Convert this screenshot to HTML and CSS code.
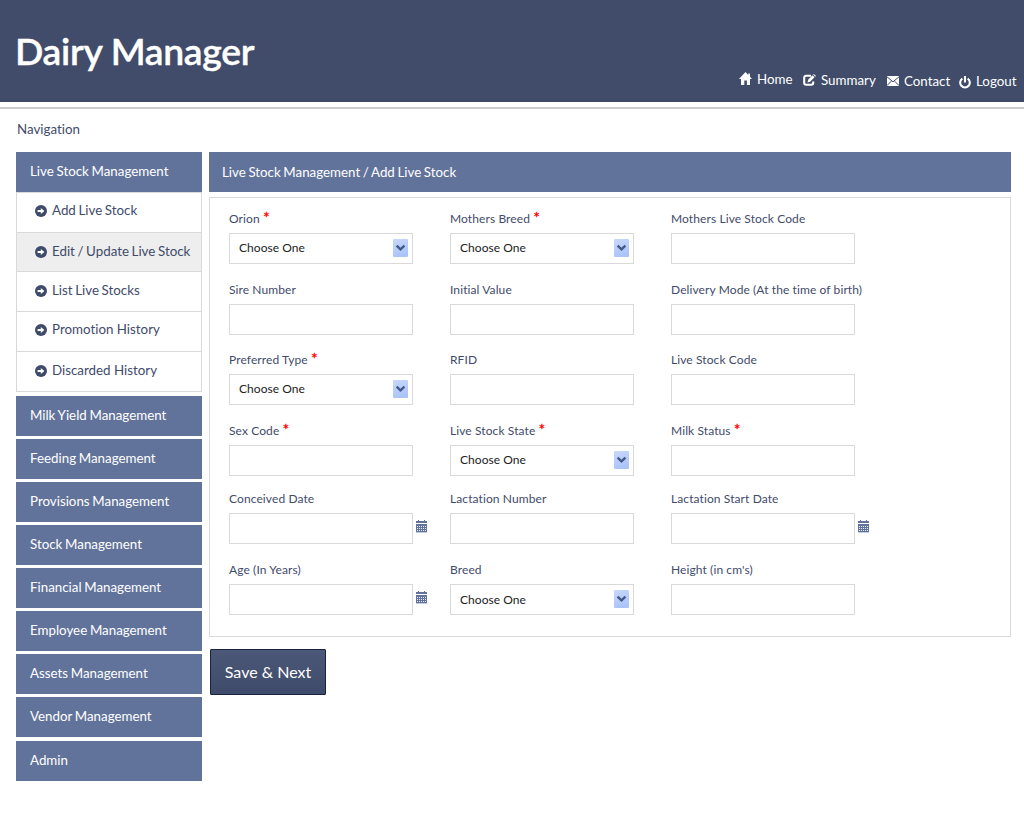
FILE: index.html
```
<!DOCTYPE html>
<html lang="en">
<head>
<meta charset="utf-8">
<title>Dairy Manager</title>
<link rel="stylesheet" href="styles.css">
</head>
<body>
<svg class="defs" width="0" height="0" aria-hidden="true">
<symbol id="arrow" viewBox="0 0 12 12"><circle cx="6" cy="6" r="6" fill="#3f4b6a"/><path d="M2.6 5.1h3.2V3L9.4 6 5.8 9V6.9H2.6z" fill="#fff"/></symbol>
<symbol id="cal" viewBox="0 0 11 13"><path d="M2 0h1v1h5V0h1v1h2v2H0V1h2zM0 4h11v8H0z" fill="#61729b"/><path d="M1 6.5h9M1 8.5h9M1 10.5h9" stroke="#fff" stroke-opacity=".85" stroke-dasharray="1 1"/><path d="M0 12h11v1H0z" fill="#c3cbe0"/></symbol>
<symbol id="chev" viewBox="0 0 15 18"><rect width="15" height="18" rx="1" fill="url(#g)"/><path d="M3.6 6.6 7.5 10.3l3.9-3.7" fill="none" stroke="#425885" stroke-width="2.3"/></symbol>
<linearGradient id="g" x2="0.3" y2="1"><stop stop-color="#c9d8fb"/><stop offset="1" stop-color="#abc4f8"/></linearGradient>
</svg>
<header class="top">
<h1>Dairy Manager</h1>
<nav>
<a class="home"><svg width="13" height="13" viewBox="0 0 13 13"><path d="M6.5 0 0 7h2v6h3.3V8.5h2.6V13H11V7h2l-2-2.2V1.5H9.3v1.6z" fill="#fff"/></svg><span>Home</span></a>
<a class="summary"><svg width="13" height="12" viewBox="0 0 13 12"><path d="M8 1.8H3.2Q1.2 1.8 1.2 3.8v5q0 2 2 2h5q2 0 2-2V7.5" fill="none" stroke="#fff" stroke-width="2.1"/><path d="m4.5 8.5.6-2.7L9.5 1.2l2 2-4.4 4.5zM10.1.6l.7-.6L13 2l-.8.7z" fill="#fff"/></svg><span>Summary</span></a>
<a class="contact"><svg width="12" height="10" viewBox="0 0 12 10"><path d="M0 0h12v10H0z" fill="#fff"/><path d="m0 .8 6 5 6-5M0 9.6l4.3-4.4M12 9.6 7.7 5.2" fill="none" stroke="#3f4b6a"/></svg><span>Contact</span></a>
<a class="logout"><svg width="12" height="13" viewBox="0 0 12 13"><path d="M3.4 2.6a4.8 4.8 0 1 0 5.2 0M6 0v6.5" fill="none" stroke="#fff" stroke-width="2.1"/></svg><span>Logout</span></a>
</nav>
</header>
<div class="rule"></div>
<p class="caption">Navigation</p>
<main>
<aside>
<a class="item">Live Stock Management</a>
<ul>
<li class="a"><svg><use href="#arrow"/></svg><span>Add Live Stock</span></li>
<li class="b"><svg><use href="#arrow"/></svg><span>Edit / Update Live Stock</span></li>
<li class="c"><svg><use href="#arrow"/></svg><span>List Live Stocks</span></li>
<li class="d"><svg><use href="#arrow"/></svg><span>Promotion History</span></li>
<li class="e"><svg><use href="#arrow"/></svg><span>Discarded History</span></li>
</ul>
<a class="item">Milk Yield Management</a>
<a class="item">Feeding Management</a>
<a class="item">Provisions Management</a>
<a class="item">Stock Management</a>
<a class="item">Financial Management</a>
<a class="item">Employee Management</a>
<a class="item">Assets Management</a>
<a class="item">Vendor Management</a>
<a class="item admin">Admin</a>
</aside>
<section>
<h2>Live Stock Management / Add Live Stock</h2>
<form>
<div class="field"><label>Orion <i>*</i></label><div class="box">Choose One<svg><use href="#chev"/></svg></div></div>
<div class="field"><label>Mothers Breed <i>*</i></label><div class="box">Choose One<svg><use href="#chev"/></svg></div></div>
<div class="field"><label>Mothers Live Stock Code</label><div class="box"></div></div>
<div class="field"><label>Sire Number</label><div class="box"></div></div>
<div class="field"><label>Initial Value</label><div class="box"></div></div>
<div class="field"><label>Delivery Mode (At the time of birth)</label><div class="box"></div></div>
<div class="field"><label>Preferred Type <i>*</i></label><div class="box">Choose One<svg><use href="#chev"/></svg></div></div>
<div class="field"><label>RFID</label><div class="box"></div></div>
<div class="field"><label>Live Stock Code</label><div class="box"></div></div>
<div class="field"><label>Sex Code <i>*</i></label><div class="box"></div></div>
<div class="field"><label>Live Stock State <i>*</i></label><div class="box">Choose One<svg><use href="#chev"/></svg></div></div>
<div class="field"><label>Milk Status <i>*</i></label><div class="box"></div></div>
<div class="field"><label>Conceived Date</label><div class="dated"><div class="box"></div><svg><use href="#cal"/></svg></div></div>
<div class="field"><label>Lactation Number</label><div class="box"></div></div>
<div class="field"><label>Lactation Start Date</label><div class="dated"><div class="box"></div><svg><use href="#cal"/></svg></div></div>
<div class="field"><label>Age (In Years)</label><div class="dated"><div class="box"></div><svg><use href="#cal"/></svg></div></div>
<div class="field"><label>Breed</label><div class="box low">Choose One<svg><use href="#chev"/></svg></div></div>
<div class="field"><label>Height (in cm's)</label><div class="box"></div></div>
</form>
<button>Save &amp; Next</button>
</section>
</main>
</body>
</html>
```
FILE: styles.css
```
* { box-sizing: border-box; }
body { margin: 0; height: 840px; background: #fff; font: 13.33px/20px Lato, sans-serif; color: #3f4b6a; overflow: hidden; font-variant-ligatures: none; }
svg { flex: none; display: block; }
.defs { position: absolute; }
.top { height: 102px; background: #404c6a; border-bottom: 2px solid #3d4866; color: #fff; display: flex; justify-content: space-between; }
h1 { margin: 27px 0 0 15px; font-size: 37.3px; line-height: 48px; font-weight: 600; letter-spacing: -0.3px; white-space: nowrap; -webkit-text-stroke: 0.4px #fff; }
nav { display: flex; align-items: flex-start; padding-top: 69px; }
nav a { display: flex; align-items: flex-start; white-space: nowrap; }
nav svg { margin-top: 3px; }
.home { width: 64px; gap: 5px; }
.summary { width: 84px; gap: 5px; padding-top: 1px; }
.summary svg { margin-top: 4px; }
.contact { width: 72px; gap: 5px; padding-top: 2px; }
.logout { width: 65px; gap: 5px; padding-top: 2px; }
.contact svg, .logout svg { margin-top: 5px; }
.rule { height: 2px; margin-top: 5px; background: #cbcacc; }
.caption { margin: 10px 0 0 17px; height: 33px; }
main { display: flex; gap: 7px; padding-left: 16px; }
aside { width: 186px; }
.item { display: block; height: 40px; padding: 9px 14px; background: #62739b; color: #fff; margin-bottom: 3px; word-spacing: -0.7px; white-space: nowrap; }
.item:first-child { margin: 0; }
.admin { margin-top: 4px; }
ul { list-style: none; margin: 0 0 4px; padding: 0; border: 1px solid #d9d9d9; }
li { height: 40px; padding: 8px 0 0 18px; display: flex; gap: 5px; border-bottom: 1px solid #d9d9d9; word-spacing: -0.8px; white-space: nowrap; }
li svg { width: 12px; height: 12px; margin-top: 5px; }
.a, .d { padding-top: 7px; }
.b { height: 39px; background: #eee; }
.e { height: 39px; border: 0; }
.d, .e { word-spacing: 0; }
section { width: 802px; }
h2 { margin: 0 0 5px; height: 40px; padding: 10px 13px; background: #62739b; color: #fff; font: inherit; word-spacing: -0.8px; }
form { height: 440px; border: 1px solid #d9d9d9; padding: 10px 0 0 19px; display: grid; grid-template-columns: 221px 221px 221px; grid-template-rows: 71px 70px 71px 68px 71px 60px; }
label { display: block; height: 25px; line-height: 21px; font-size: 12px; letter-spacing: 0.1px; white-space: nowrap; }
label i { font: 16px/10px Lato, sans-serif; color: #f00; -webkit-text-stroke: 0.3px #f00; }
.box { width: 184px; height: 31px; border: 1px solid #d9d9d9; background: #fff; color: #222; font-size: 12px; line-height: 28px; letter-spacing: 0.05px; padding: 0 4px 0 9px; display: flex; justify-content: space-between; }
.low { line-height: 30px; }
.box svg { width: 15px; height: 18px; margin-top: 5px; }
.dated { display: flex; gap: 3px; }
.dated > svg { width: 11px; height: 13px; margin-top: 7px; }
button { display: block; margin: 12px 0 0 1px; width: 116px; height: 46px; padding: 0; border: 1px solid #17233f; border-radius: 1px; background: linear-gradient(#4b5878, #3f4b6a); color: #fff; font: 16px/20px Lato, sans-serif; }
```
